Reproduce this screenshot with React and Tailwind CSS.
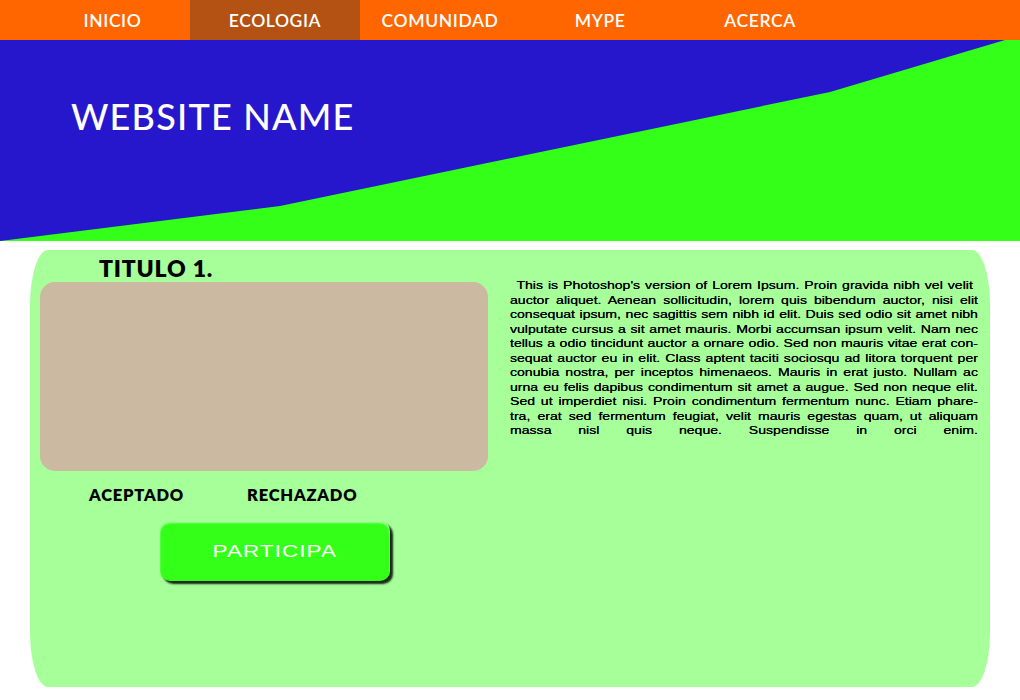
import React from 'react';

const navItems = [
  { label: 'INICIO', width: 'w-[155px]' },
  { label: 'ECOLOGIA', width: 'w-[170px]', active: true },
  { label: 'COMUNIDAD', width: 'w-[160px]' },
  { label: 'MYPE', width: 'w-[160px]' },
  { label: 'ACERCA', width: 'w-[160px]' },
];

const loremLines = [
  "This is Photoshop's version  of Lorem Ipsum. Proin gravida nibh vel velit",
  'auctor aliquet. Aenean sollicitudin, lorem quis bibendum auctor, nisi elit',
  'consequat ipsum, nec sagittis sem nibh id elit. Duis sed odio sit amet nibh',
  'vulputate cursus a sit amet mauris. Morbi accumsan ipsum velit. Nam nec',
  'tellus a odio tincidunt auctor a ornare odio. Sed non  mauris vitae erat con-',
  'sequat auctor eu in elit. Class aptent taciti sociosqu ad litora torquent per',
  'conubia nostra, per inceptos himenaeos. Mauris in erat justo. Nullam ac',
  'urna eu felis dapibus condimentum sit amet a augue. Sed non neque elit.',
  'Sed ut imperdiet nisi. Proin condimentum fermentum nunc. Etiam phare-',
  'tra, erat sed fermentum feugiat, velit mauris egestas quam, ut aliquam',
  'massa nisl quis neque. Suspendisse in orci enim.',
];

function NavBar() {
  return (
    <nav className="flex h-[40px] bg-[#ff6600] pl-[35px]">
      {navItems.map((item) => (
        <a
          key={item.label}
          href="#"
          className={`${item.width} flex items-center justify-center pt-[2px] text-[17.5px] font-semibold tracking-[0.6px] text-white ${item.active ? 'bg-[#b35212]' : ''}`}
        >
          {item.label}
        </a>
      ))}
    </nav>
  );
}

function Banner() {
  return (
    <header className="relative h-[201px] bg-[#2617cc]">
      {/* green slope drawn over the blue band */}
      <svg className="absolute inset-0 h-full w-full" viewBox="0 0 1020 201" preserveAspectRatio="none">
        <polygon points="0,201 280,166 830,52 1005,0 1020,0 1020,201" fill="#33ff19" />
      </svg>
      <h1 className="relative pl-[71px] pt-[58px] text-[36px] font-medium leading-none tracking-[1.2px] text-white">
        WEBSITE NAME
      </h1>
    </header>
  );
}

function App() {
  return (
    <div className="h-[700px] w-[1020px] overflow-hidden bg-white font-['Lato',sans-serif]">
      <NavBar />
      <Banner />
      <main className="mx-[30px] mt-[9px] flex h-[437px] rounded-[18px/55px] bg-[#a7ff99]">
        <section className="flex w-[480px] flex-col pl-[10px]">
          <h2 className="pl-[59px] pt-[7px] text-[23px] font-extrabold leading-none tracking-[0.8px] text-black">TITULO 1.</h2>
          <div className="mt-[2px] h-[189px] w-[448px] rounded-[15px] bg-[#cbb9a2]"></div>
          <div className="mt-[14px] flex text-[16.5px] font-extrabold leading-[20px] tracking-[0.8px] text-black">
            <span className="ml-[49px] w-[158px]">ACEPTADO</span>
            <span>RECHAZADO</span>
          </div>
          <button className="ml-[120px] mt-[16px] flex h-[60px] w-[230px] items-center justify-center rounded-[10px] bg-[#33ff19] text-white shadow-[inset_0_2px_2px_rgba(255,255,255,0.6),3px_3px_2px_rgba(0,0,0,0.85)]">
            <span className="inline-block scale-x-[1.36] font-['Liberation_Sans',sans-serif] text-[16.5px] tracking-[0.8px]">PARTICIPA</span>
          </button>
        </section>
        <section className="w-[468px] pt-[28px]">
          {/* the copy is set horizontally stretched, as in the mockup */}
          <div className="w-[365.6px] origin-left scale-x-[1.28] font-['Liberation_Sans',sans-serif] text-[11px] leading-[14.5px] text-black [text-shadow:0_0_0.5px_#000]">
            {loremLines.map((line, i) => (
              <div
                key={i}
                className={`text-justify [text-align-last:justify] ${i === 0 ? 'pl-[5px] pr-[4px]' : ''}`}
              >
                {line}
              </div>
            ))}
          </div>
        </section>
      </main>
    </div>
  );
}

export default App;
